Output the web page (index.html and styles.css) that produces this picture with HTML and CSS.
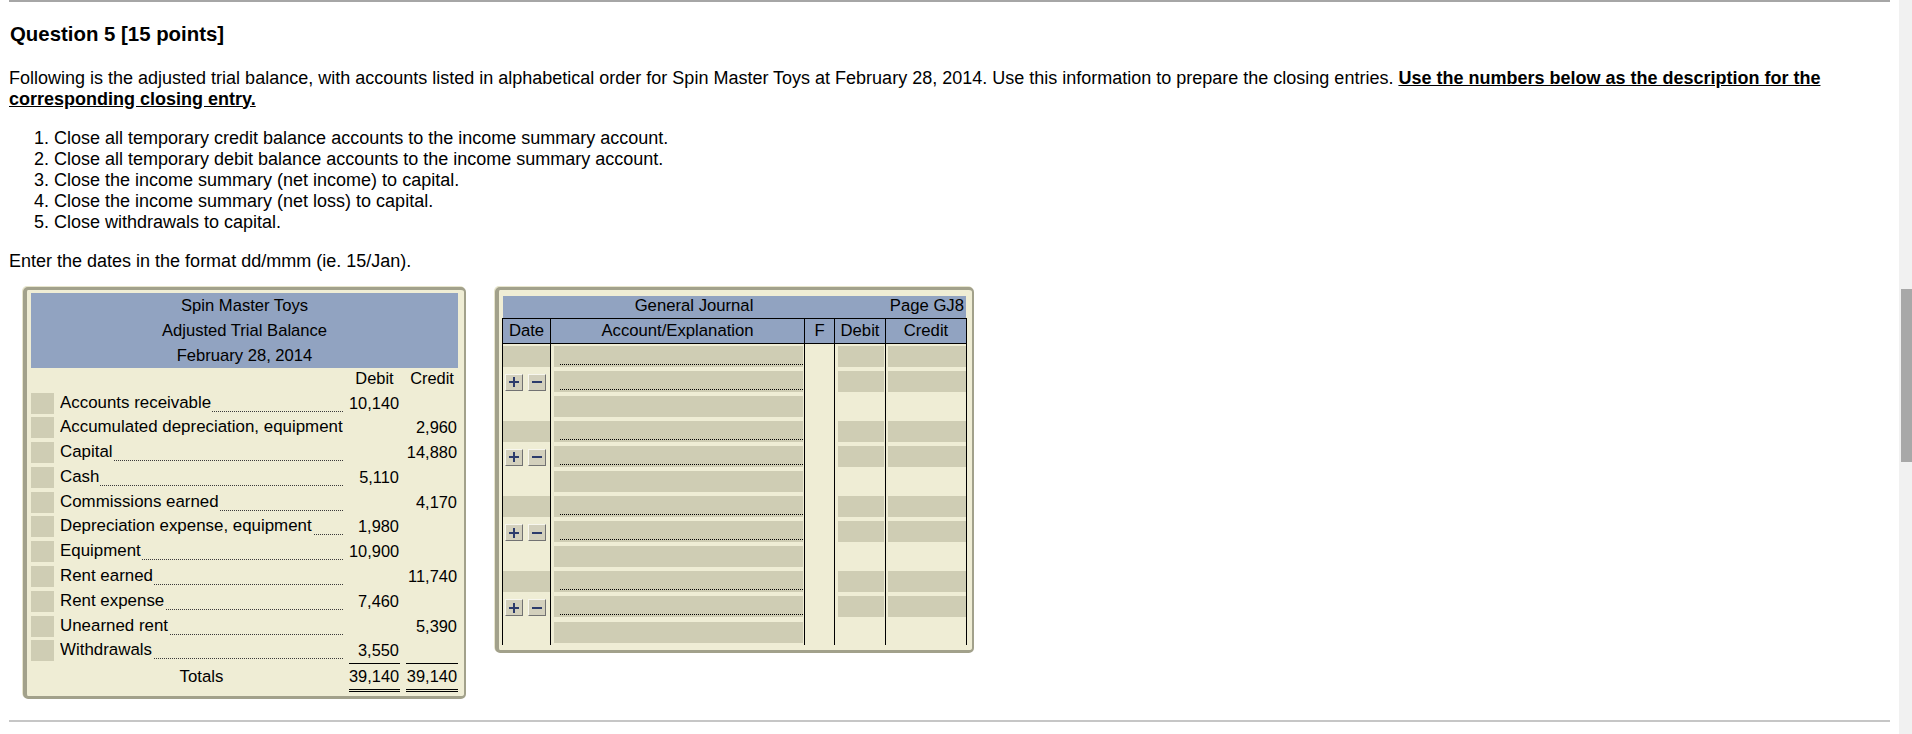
FILE: index.html
```html
<!DOCTYPE html>
<html lang="en">
<head>
<meta charset="utf-8">
<title>Question 5</title>
<link rel="stylesheet" href="styles.css">
</head>
<body>
<div class="page">
  <div class="rule rule-top"></div>
  <h1 class="title">Question 5 [15 points]</h1>
  <p class="intro">Following is the adjusted trial balance, with accounts listed in alphabetical order for Spin Master Toys at February 28, 2014. Use this information to prepare the closing entries. <strong class="em">Use the numbers below as the description for the</strong><br><strong class="em">corresponding closing entry.</strong></p>
  <ol class="steps">
    <li>Close all temporary credit balance accounts to the income summary account.</li>
    <li>Close all temporary debit balance accounts to the income summary account.</li>
    <li>Close the income summary (net income) to capital.</li>
    <li>Close the income summary (net loss) to capital.</li>
    <li>Close withdrawals to capital.</li>
  </ol>
  <p class="note">Enter the dates in the format dd/mmm (ie. 15/Jan).</p>

  <div class="frames">
    <div class="frame tb">
      <div class="tb-head">
        <div>Spin Master Toys</div>
        <div>Adjusted Trial Balance</div>
        <div>February 28, 2014</div>
      </div>
      <div class="tb-grid">
        <div class="colh"></div><div class="colh"></div><div class="colh">Debit</div><div class="colh">Credit</div>

        <div class="box"></div><div class="lbl"><span>Accounts receivable</span></div><div class="num">10,140</div><div class="num"></div>
        <div class="box"></div><div class="lbl"><span>Accumulated depreciation, equipment</span></div><div class="num"></div><div class="num cr">2,960</div>
        <div class="box"></div><div class="lbl"><span>Capital</span></div><div class="num"></div><div class="num cr">14,880</div>
        <div class="box"></div><div class="lbl"><span>Cash</span></div><div class="num">5,110</div><div class="num"></div>
        <div class="box"></div><div class="lbl"><span>Commissions earned</span></div><div class="num"></div><div class="num cr">4,170</div>
        <div class="box"></div><div class="lbl"><span>Depreciation expense, equipment</span></div><div class="num">1,980</div><div class="num"></div>
        <div class="box"></div><div class="lbl"><span>Equipment</span></div><div class="num">10,900</div><div class="num"></div>
        <div class="box"></div><div class="lbl"><span>Rent earned</span></div><div class="num"></div><div class="num cr">11,740</div>
        <div class="box"></div><div class="lbl"><span>Rent expense</span></div><div class="num">7,460</div><div class="num"></div>
        <div class="box"></div><div class="lbl"><span>Unearned rent</span></div><div class="num"></div><div class="num cr">5,390</div>
        <div class="box"></div><div class="lbl"><span>Withdrawals</span></div><div class="num">3,550</div><div class="num"></div>

        <div class="tot-blank"></div><div class="tot-label">Totals</div><div class="num tot">39,140</div><div class="num tot cr">39,140</div>
      </div>
    </div>

    <div class="frame gj">
      <div class="gj-title"><div class="gj-name">General Journal</div><div class="gj-page">Page GJ8</div></div>
      <div class="gj-table">
        <div class="gh">Date</div><div class="gh">Account/Explanation</div><div class="gh">F</div><div class="gh">Debit</div><div class="gh last">Credit</div>

        <!-- entry 1 -->
        <div class="gc"><div class="f"></div></div><div class="gc acc"><div class="f line"></div></div><div class="gc"></div><div class="gc amt"><div class="f"></div></div><div class="gc amt2 last"><div class="f"></div></div>
        <div class="gc"><div class="btns"><span class="btn"><svg width="10" height="10" viewBox="0 0 10 10"><path d="M0 5H10M5 0V10" stroke="#2c3b6c" stroke-width="2"/></svg></span><span class="btn"><svg width="10" height="10" viewBox="0 0 10 10"><path d="M0 5H10" stroke="#2c3b6c" stroke-width="2"/></svg></span></div></div><div class="gc acc"><div class="f line"></div></div><div class="gc"></div><div class="gc amt"><div class="f"></div></div><div class="gc amt2 last"><div class="f"></div></div>
        <div class="gc"></div><div class="gc acc"><div class="f"></div></div><div class="gc"></div><div class="gc"></div><div class="gc last"></div>

        <!-- entry 2 -->
        <div class="gc"><div class="f"></div></div><div class="gc acc"><div class="f line"></div></div><div class="gc"></div><div class="gc amt"><div class="f"></div></div><div class="gc amt2 last"><div class="f"></div></div>
        <div class="gc"><div class="btns"><span class="btn"><svg width="10" height="10" viewBox="0 0 10 10"><path d="M0 5H10M5 0V10" stroke="#2c3b6c" stroke-width="2"/></svg></span><span class="btn"><svg width="10" height="10" viewBox="0 0 10 10"><path d="M0 5H10" stroke="#2c3b6c" stroke-width="2"/></svg></span></div></div><div class="gc acc"><div class="f line"></div></div><div class="gc"></div><div class="gc amt"><div class="f"></div></div><div class="gc amt2 last"><div class="f"></div></div>
        <div class="gc"></div><div class="gc acc"><div class="f"></div></div><div class="gc"></div><div class="gc"></div><div class="gc last"></div>

        <!-- entry 3 -->
        <div class="gc"><div class="f"></div></div><div class="gc acc"><div class="f line"></div></div><div class="gc"></div><div class="gc amt"><div class="f"></div></div><div class="gc amt2 last"><div class="f"></div></div>
        <div class="gc"><div class="btns"><span class="btn"><svg width="10" height="10" viewBox="0 0 10 10"><path d="M0 5H10M5 0V10" stroke="#2c3b6c" stroke-width="2"/></svg></span><span class="btn"><svg width="10" height="10" viewBox="0 0 10 10"><path d="M0 5H10" stroke="#2c3b6c" stroke-width="2"/></svg></span></div></div><div class="gc acc"><div class="f line"></div></div><div class="gc"></div><div class="gc amt"><div class="f"></div></div><div class="gc amt2 last"><div class="f"></div></div>
        <div class="gc"></div><div class="gc acc"><div class="f"></div></div><div class="gc"></div><div class="gc"></div><div class="gc last"></div>

        <!-- entry 4 -->
        <div class="gc"><div class="f"></div></div><div class="gc acc"><div class="f line"></div></div><div class="gc"></div><div class="gc amt"><div class="f"></div></div><div class="gc amt2 last"><div class="f"></div></div>
        <div class="gc"><div class="btns"><span class="btn"><svg width="10" height="10" viewBox="0 0 10 10"><path d="M0 5H10M5 0V10" stroke="#2c3b6c" stroke-width="2"/></svg></span><span class="btn"><svg width="10" height="10" viewBox="0 0 10 10"><path d="M0 5H10" stroke="#2c3b6c" stroke-width="2"/></svg></span></div></div><div class="gc acc"><div class="f line"></div></div><div class="gc"></div><div class="gc amt"><div class="f"></div></div><div class="gc amt2 last"><div class="f"></div></div>
        <div class="gc"></div><div class="gc acc"><div class="f"></div></div><div class="gc"></div><div class="gc"></div><div class="gc last"></div>
      </div>
    </div>
  </div>

  <div class="rule rule-bottom"></div>
</div>
<div class="scrollbar"><div class="thumb"></div></div>
</body>
</html>
```

FILE: styles.css
```css
html, body {
  margin: 0;
  padding: 0;
  background: #ffffff;
  overflow: hidden;
}
body {
  font-family: "Liberation Sans", Arial, sans-serif;
  color: #000;
}
.page {
  width: 1881px;
  padding-left: 9px;
}
.rule {
  width: 1881px;
}
.rule-top {
  height: 2px;
  background: #a6a6a6;
}
.rule-bottom {
  height: 2px;
  margin-top: 21px;
  background: #c6c6c6;
}
.title {
  margin: 20px 0 0 1px;
  font-size: 20.4px;
  line-height: 24px;
  font-weight: bold;
}
.intro {
  margin: 21.5px 0 0 0;
  font-size: 18px;
  line-height: 21px;
}
.em {
  font-weight: bold;
  text-decoration: underline;
}
.steps {
  margin: 18px 0 0 0;
  padding-left: 45px;
  font-size: 18px;
  line-height: 21px;
}
.note {
  margin: 18px 0 0 0;
  font-size: 18px;
  line-height: 21px;
}

/* frames */
.frames {
  display: flex;
  align-items: flex-start;
  gap: 29px;
  margin-top: 15px;
  margin-left: 14px;
}
.frame {
  background: #efedd5;
  border-style: solid;
  border-color: #a2a18b;
  border-width: 3px 2px 3px 4px;
  border-radius: 5px;
  box-shadow: -1px -1px 0 #e7e5cd;
}
.tb {
  padding: 3px 6px 4px 4px;
}
.gj {
  padding: 6px 5px 5px 3px;
}

/* trial balance */
.tb-head {
  width: 427px;
  height: 75px;
  background: #91a3c1;
  text-align: center;
  font-size: 16.6px;
  line-height: 25px;
}
.tb-grid {
  display: grid;
  grid-template-columns: 23px 283px 51px 52px;
  column-gap: 6px;
}
.colh {
  height: 23px;
  line-height: 20px;
  font-size: 16.4px;
  text-align: center;
}
.box {
  height: 21px;
  margin-top: 2px;
  background: #cfcdb4;
}
.lbl {
  height: 24.8px;
  line-height: 24.8px;
  font-size: 16.9px;
  white-space: nowrap;
  overflow: hidden;
  background-image: repeating-linear-gradient(90deg, #3a3a3a 0 1px, transparent 1px 2px);
  background-size: 100% 1px;
  background-position: 0 20px;
  background-repeat: no-repeat;
}
.lbl span {
  background: #efedd5;
  padding-right: 1px;
}
.num {
  height: 24.8px;
  line-height: 24.8px;
  font-size: 16.4px;
  text-align: right;
  padding-right: 1px;
}
.tot-blank {
  height: 29px;
}
.tot-label {
  height: 29px;
  line-height: 27px;
  font-size: 16.8px;
  text-align: center;
}
.num.tot {
  height: 29px;
  line-height: 25px;
  box-sizing: border-box;
  border-top: 1px solid #000;
  border-bottom: 3px double #000;
}

/* general journal */
.gj-title {
  display: grid;
  grid-template-columns: 382px 81px;
  margin: 0 1px;
  height: 22px;
  background: #91a3c1;
  font-size: 16.7px;
  line-height: 19px;
}
.gj-name {
  text-align: center;
}
.gj-page {
  text-align: right;
  padding-right: 2px;
}
.gj-table {
  display: grid;
  grid-template-columns: 48px 254px 30px 51px 82px;
  width: 465px;
}
.gh {
  box-sizing: border-box;
  height: 26px;
  line-height: 24px;
  background: #91a3c1;
  border-top: 1px solid #000;
  border-bottom: 1px solid #000;
  border-left: 1px solid #000;
  text-align: center;
  font-size: 16.7px;
}
.gh.last {
  border-right: 1px solid #000;
}
.gc {
  box-sizing: border-box;
  height: 25.1px;
  border-left: 1px solid #000;
}
.gc.last {
  border-right: 1px solid #000;
}
.f {
  height: 21px;
  margin-top: 2px;
  background-color: #cfcdb4;
}
.gc.acc .f {
  margin-left: 3px;
  margin-right: 1px;
}
.gc.amt .f {
  margin-left: 3px;
  margin-right: 1px;
}
.gc.amt2 .f {
  margin-left: 2px;
}
.f.line {
  background-image: repeating-linear-gradient(90deg, #000 0 1px, transparent 1px 2px);
  background-size: calc(100% - 6px) 1px;
  background-position: 6px 18px;
  background-repeat: no-repeat;
}
.btns {
  display: flex;
  gap: 5px;
  padding: 5px 0 0 2px;
}
.btn {
  box-sizing: border-box;
  width: 18px;
  height: 17px;
  display: flex;
  align-items: center;
  justify-content: center;
  background: #d3d0bd;
  border: 1px solid;
  border-color: #f7f6ee #727272 #727272 #f7f6ee;
}
.btn svg {
  display: block;
}

/* scrollbar */
.scrollbar {
  position: fixed;
  top: 0;
  right: 0;
  width: 13px;
  height: 100%;
  background: #f1f1f1;
}
.thumb {
  margin-top: 289px;
  margin-left: 2px;
  width: 11px;
  height: 173px;
  background: #a8a8a8;
}
```
